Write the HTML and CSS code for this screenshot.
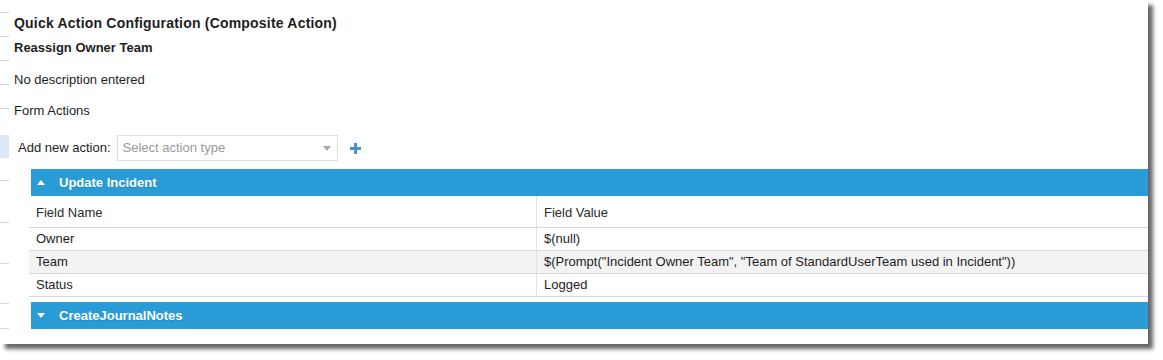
FILE: index.html
```html
<!DOCTYPE html>
<html>
<head>
<meta charset="utf-8">
<link rel="stylesheet" href="styles.css">
</head>
<body>
<div class="card">
  <div class="gutter">
    <div class="g g-13"></div>
    <div class="g g-24"></div>
    <div class="g g-24"></div>
    <div class="g g-24"></div>
    <div class="g g-24"></div>
    <div class="g g-gap"></div>
    <div class="g g-sel"></div>
    <div class="g g-23"></div>
    <div class="g g-42"></div>
    <div class="g g-41"></div>
    <div class="g g-40"></div>
    <div class="g g-25"></div>
  </div>
  <div class="main">
    <div class="title">Quick Action Configuration (Composite Action)</div>
    <div class="subtitle">Reassign Owner Team</div>
    <div class="desc">No description entered</div>
    <div class="section-label">Form Actions</div>
    <div class="add-row">
      <span class="add-label">Add new action:</span>
      <div class="select">
        <span class="placeholder">Select action type</span>
        <span class="caret"></span>
      </div>
      <svg class="plus" width="11" height="11" viewBox="0 0 11 11"><rect x="4" y="0" width="3" height="11" fill="#4a90d0"/><rect x="0" y="4" width="11" height="3" fill="#4a90d0"/></svg>
    </div>
    <div class="actions">
      <div class="bar"><span class="tri tri-up"></span><span class="bar-title">Update Incident</span></div>
      <div class="table">
        <div class="tr th"><div class="td c1">Field Name</div><div class="td c2">Field Value</div></div>
        <div class="tr"><div class="td c1">Owner</div><div class="td c2">$(null)</div></div>
        <div class="tr alt"><div class="td c1">Team</div><div class="td c2">$(Prompt("Incident Owner Team", "Team of StandardUserTeam used in Incident"))</div></div>
        <div class="tr"><div class="td c1">Status</div><div class="td c2">Logged</div></div>
      </div>
      <div class="bar bar-2"><span class="tri tri-down"></span><span class="bar-title">CreateJournalNotes</span></div>
    </div>
  </div>
</div>
</body>
</html>
```

FILE: styles.css
```css
* { box-sizing: border-box; }
html, body { margin: 0; padding: 0; background: #fff; }
body {
  min-height: 360px;
  font-family: "Liberation Sans", Arial, sans-serif;
  color: #1e1e1e;
  font-size: 13px;
  line-height: 16px;
}
.card {
  width: 1148px;
  height: 344px;
  background: #fff;
  display: flex;
  box-shadow: 5px 5px 4px rgba(0, 0, 0, 0.6);
  overflow: hidden;
}
.gutter {
  width: 9px;
  flex: none;
  display: flex;
  flex-direction: column;
}
.g { border-bottom: 1px solid #d6d6d6; }
.g-13 { height: 13px; }
.g-24 { height: 24px; }
.g-gap { height: 26px; border-bottom: none; }
.g-sel { height: 23px; background: #dce9f8; border-bottom: none; }
.g-23 { height: 23px; }
.g-42 { height: 42px; }
.g-41 { height: 41px; }
.g-40 { height: 40px; }
.g-25 { height: 25px; }

.main {
  flex: 1;
  padding-left: 5px;
  min-width: 0;
}
.title {
  margin-top: 15px;
  font-size: 14px;
  font-weight: bold;
  letter-spacing: 0.2px;
}
.subtitle {
  margin-top: 9px;
  font-weight: bold;
}
.desc { margin-top: 16px; }
.section-label { margin-top: 15px; }

.add-row {
  margin-top: 16px;
  display: flex;
  align-items: center;
  height: 26px;
  padding-left: 4px;
}
.select {
  margin-left: 6px;
  width: 221px;
  height: 26px;
  border: 1px solid #dedede;
  display: flex;
  align-items: center;
  justify-content: space-between;
  padding: 0 6px 0 5px;
}
.placeholder { color: #9a9a9a; }
.caret {
  width: 0;
  height: 0;
  border-left: 4.5px solid transparent;
  border-right: 4.5px solid transparent;
  border-top: 5px solid #aaa;
}
.plus { margin-left: 12px; }

.actions {
  margin-top: 8px;
  margin-left: 15px;
}
.bar {
  margin-left: 2px;
  height: 27px;
  background: #299bd6;
  color: #fff;
  display: flex;
  align-items: center;
  padding-left: 6px;
  font-weight: bold;
  line-height: 27px;
}
.bar-title { margin-left: 14px; text-shadow: 0 1px 0 rgba(0,0,0,0.15); }
.tri { width: 0; height: 0; border-left: 4.5px solid transparent; border-right: 4.5px solid transparent; }
.tri-up { border-bottom: 5px solid #fff; }
.tri-down { border-top: 5px solid #fff; }
.bar-2 { margin-top: 5px; }

.tr {
  display: flex;
  border-bottom: 1px solid #d9d9d9;
  height: 23px;
}
.tr.th { height: 32px; }
.tr.alt { background: #f3f3f3; }
.td {
  padding: 3px 7px;
  white-space: nowrap;
}
.th .td { padding-top: 9px; color: #2a2a2a; }
.c1 { width: 508px; flex: none; border-right: 1px solid #e3e3e3; }
.c2 { flex: 1; }
```
